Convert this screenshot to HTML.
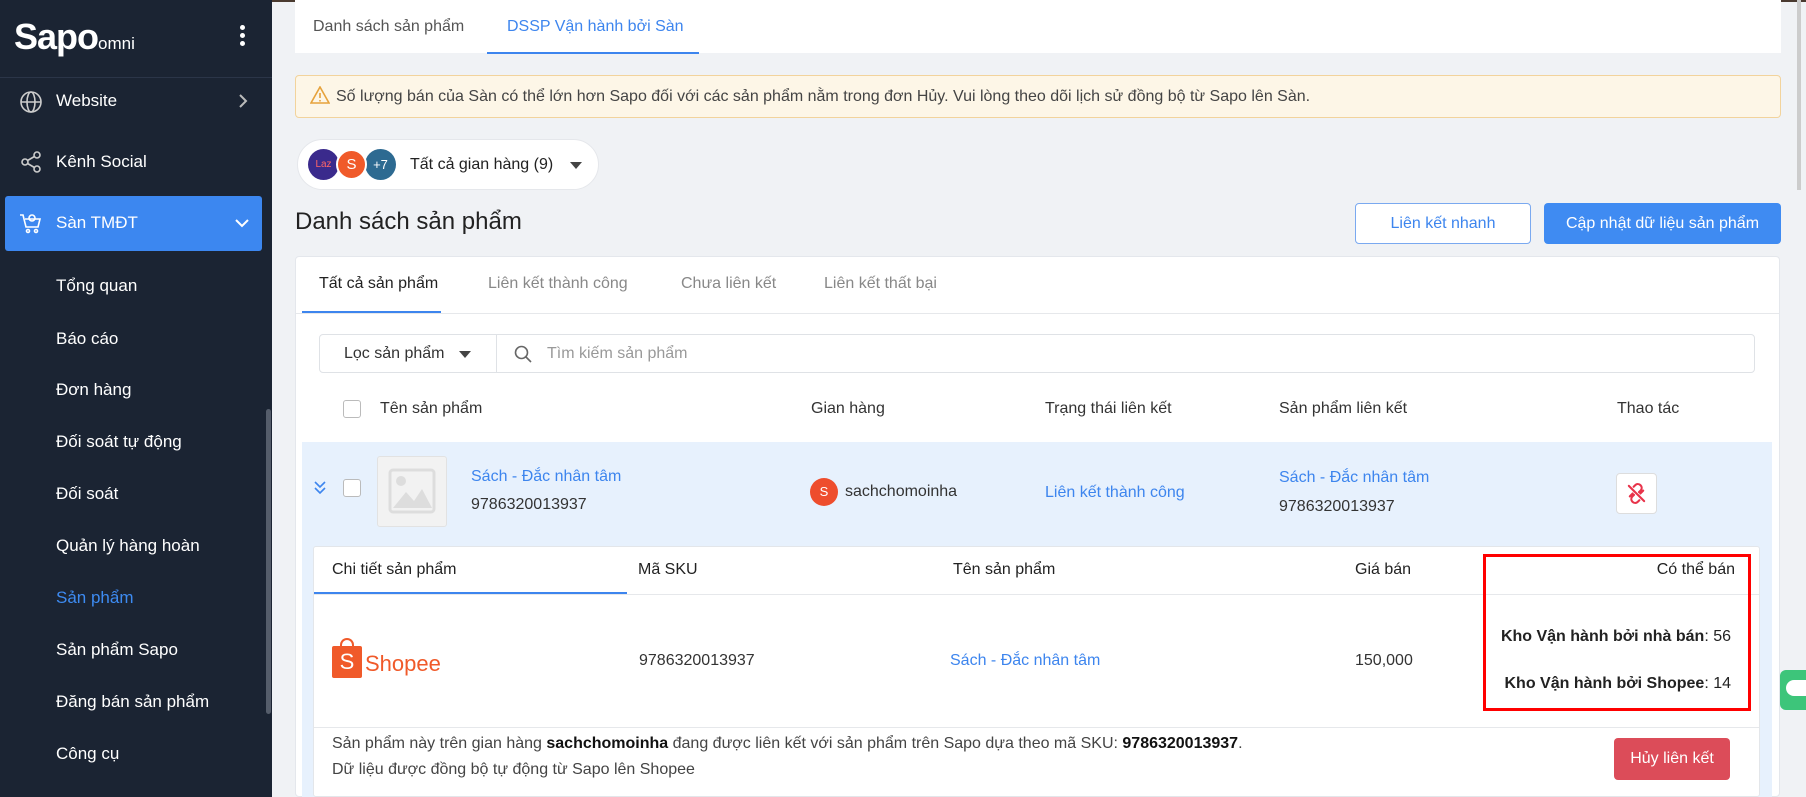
<!DOCTYPE html>
<html><head><meta charset="utf-8"><style>
*{margin:0;padding:0;box-sizing:border-box}
body{width:1806px;height:797px;overflow:hidden;background:#f0f2f5;font-family:"Liberation Sans",sans-serif;font-size:16px;color:#222;position:relative}
.a{position:absolute;white-space:nowrap}
.side{position:absolute;left:0;top:0;width:272px;height:797px;background:#1b2433}
.side .a{color:#fff;font-size:17px}
.blue{color:#3d85ee}
.cb{position:absolute;width:18px;height:18px;border:1.5px solid #bbb;border-radius:3px;background:#fff}
.tc{transform:translateY(-50%)}
</style></head><body>
<div class="a" style="left:0;top:0;width:1806px;height:2px;background:#4a3a30"></div>
<div class="side">
  <div class="a" style="left:14px;top:16px;font-size:36px;font-weight:bold;letter-spacing:-1px;color:#fff">Sapo<span style="font-size:17px;font-weight:normal;letter-spacing:0">omni</span></div>
  <div class="a" style="left:240px;top:25px;width:5px;height:5px;border-radius:50%;background:#fff;box-shadow:0 8px 0 #fff,0 16px 0 #fff"></div>
  <div class="a" style="left:0;top:77px;width:272px;height:1px;background:#2b3548"></div>
  <svg class="a" style="left:19px;top:90px" width="24" height="24" viewBox="0 0 24 24" fill="none" stroke="#ccc" stroke-width="1.6"><circle cx="12" cy="12" r="10"/><ellipse cx="12" cy="12" rx="4" ry="10"/><path d="M2 12h20"/></svg>
  <div class="a tc" style="left:56px;top:101px">Website</div>
  <svg class="a" style="left:238px;top:93px" width="10" height="16" viewBox="0 0 10 16" fill="none" stroke="#bbb" stroke-width="2"><path d="M2 2l6 6-6 6"/></svg>
  <svg class="a" style="left:19px;top:150px" width="24" height="24" viewBox="0 0 24 24" fill="none" stroke="#ccc" stroke-width="1.6"><circle cx="18" cy="5" r="3"/><circle cx="6" cy="12" r="3"/><circle cx="18" cy="19" r="3"/><path d="M8.6 13.5l6.8 4M15.4 6.5l-6.8 4"/></svg>
  <div class="a tc" style="left:56px;top:162px">Kênh Social</div>
  <div class="a" style="left:5px;top:196px;width:257px;height:55px;background:#3c87f0;border-radius:3px"></div>
  <svg class="a" style="left:19px;top:211px" width="24" height="24" viewBox="0 0 24 24" fill="none" stroke="#fff" stroke-width="1.6"><path d="M1 4h3l3 12h12l2-8H6"/><circle cx="9" cy="20" r="1.5"/><circle cx="17" cy="20" r="1.5"/><circle cx="13" cy="7" r="3"/></svg>
  <div class="a tc" style="left:56px;top:223px">Sàn TMĐT</div>
  <svg class="a" style="left:235px;top:218px" width="14" height="10" viewBox="0 0 14 10" fill="none" stroke="#fff" stroke-width="2"><path d="M1 2l6 6 6-6"/></svg>
  <div class="a tc" style="left:56px;top:286px">Tổng quan</div>
  <div class="a tc" style="left:56px;top:339px">Báo cáo</div>
  <div class="a tc" style="left:56px;top:390px">Đơn hàng</div>
  <div class="a tc" style="left:56px;top:442px">Đối soát tự động</div>
  <div class="a tc" style="left:56px;top:494px">Đối soát</div>
  <div class="a tc" style="left:56px;top:546px">Quản lý hàng hoàn</div>
  <div class="a tc" style="left:56px;top:598px;color:#3d8bf2">Sản phẩm</div>
  <div class="a tc" style="left:56px;top:650px">Sản phẩm Sapo</div>
  <div class="a tc" style="left:56px;top:702px">Đăng bán sản phẩm</div>
  <div class="a tc" style="left:56px;top:754px">Công cụ</div>
  <div class="a" style="left:266px;top:409px;width:5px;height:305px;background:#555d6b;border-radius:3px"></div>
</div>

<div class="a" style="left:295px;top:0;width:1486px;height:53px;background:#fff"></div>
<div class="a tc" style="left:313px;top:27px;color:#555">Danh sách sản phẩm</div>
<div class="a tc blue" style="left:507px;top:27px">DSSP Vận hành bởi Sàn</div>
<div class="a" style="left:487px;top:52px;width:212px;height:2px;background:#3d85ee"></div>

<div class="a" style="left:295px;top:75px;width:1486px;height:43px;background:#fdf6e7;border:1px solid #f2d39c;border-radius:4px"></div>
<svg class="a" style="left:310px;top:86px" width="20" height="18" viewBox="0 0 20 18" fill="none" stroke="#e6a23c" stroke-width="1.6"><path d="M10 1L19 17H1Z"/><path d="M10 7v5M10 14v1.5"/></svg>
<div class="a tc" style="left:336px;top:97px;color:#444">Số lượng bán của Sàn có thể lớn hơn Sapo đối với các sản phẩm nằm trong đơn Hủy. Vui lòng theo dõi lịch sử đồng bộ từ Sapo lên Sàn.</div>

<div class="a" style="left:297px;top:139px;width:302px;height:51px;background:#fff;border-radius:26px;border:1px solid #e5e7eb"></div>
<div class="a" style="left:308px;top:149px;width:31px;height:31px;border-radius:50%;background:#3a2a8c;color:#f66;font-size:10px;line-height:31px;text-align:center">Laz</div>
<div class="a" style="left:365px;top:149px;width:31px;height:31px;border-radius:50%;background:#2d6a91;color:#fff;font-size:13px;line-height:31px;text-align:center">+7</div>
<div class="a" style="left:336px;top:149px;width:31px;height:31px;border-radius:50%;background:#f05a2a;border:2px solid #fff;color:#fff;font-size:15px;line-height:27px;text-align:center">S</div>
<div class="a tc" style="left:410px;top:165px;color:#222">Tất cả gian hàng (9)</div>
<div class="a" style="left:570px;top:162px;border-left:6px solid transparent;border-right:6px solid transparent;border-top:7px solid #444"></div>

<div class="a tc" style="left:295px;top:222px;font-size:24px;color:#222">Danh sách sản phẩm</div>
<div class="a" style="left:1355px;top:203px;width:176px;height:41px;background:#fff;border:1px solid #7aa9f0;border-radius:4px;color:#3d85ee;text-align:center;line-height:39px">Liên kết nhanh</div>
<div class="a" style="left:1544px;top:203px;width:237px;height:41px;background:#3f8bf2;border-radius:4px;color:#fff;text-align:center;line-height:41px">Cập nhật dữ liệu sản phẩm</div>

<div class="a" style="left:295px;top:256px;width:1485px;height:541px;background:#fff;border:1px solid #e4e7ec;border-radius:4px"></div>
<div class="a tc" style="left:319px;top:284px">Tất cả sản phẩm</div>
<div class="a tc" style="left:488px;top:284px;color:#888">Liên kết thành công</div>
<div class="a tc" style="left:681px;top:284px;color:#888">Chưa liên kết</div>
<div class="a tc" style="left:824px;top:284px;color:#888">Liên kết thất bại</div>
<div class="a" style="left:296px;top:313px;width:1483px;height:1px;background:#e6e8eb"></div>
<div class="a" style="left:302px;top:311px;width:139px;height:2px;background:#3d85ee"></div>

<div class="a" style="left:319px;top:334px;width:1436px;height:39px;border:1px solid #dfe2e6;border-radius:4px"></div>
<div class="a tc" style="left:344px;top:354px;color:#333">Lọc sản phẩm</div>
<div class="a" style="left:459px;top:351px;border-left:6px solid transparent;border-right:6px solid transparent;border-top:7px solid #444"></div>
<div class="a" style="left:496px;top:334px;width:1px;height:39px;background:#dfe2e6"></div>
<svg class="a" style="left:514px;top:345px" width="18" height="18" viewBox="0 0 18 18" fill="none" stroke="#666" stroke-width="1.6"><circle cx="7.5" cy="7.5" r="6"/><path d="M12 12l5 5"/></svg>
<div class="a tc" style="left:547px;top:354px;color:#999">Tìm kiếm sản phẩm</div>

<div class="cb" style="left:343px;top:400px"></div>
<div class="a tc" style="left:380px;top:409px;color:#333">Tên sản phẩm</div>
<div class="a tc" style="left:811px;top:409px;color:#333">Gian hàng</div>
<div class="a tc" style="left:1045px;top:409px;color:#333">Trạng thái liên kết</div>
<div class="a tc" style="left:1279px;top:409px;color:#333">Sản phẩm liên kết</div>
<div class="a tc" style="left:1617px;top:409px;color:#333">Thao tác</div>

<div class="a" style="left:302px;top:442px;width:1470px;height:355px;background:#e7f1fd"></div>
<svg class="a" style="left:313px;top:480px" width="14" height="16" viewBox="0 0 14 16" fill="none" stroke="#3d85ee" stroke-width="1.6"><path d="M2 2l5 5 5-5M2 8l5 5 5-5"/></svg>
<div class="cb" style="left:343px;top:479px"></div>
<div class="a" style="left:377px;top:456px;width:70px;height:71px;background:#f2f2f2;border:1px solid #e2e2e2;border-radius:3px"></div>
<svg class="a" style="left:388px;top:468px" width="48" height="46" viewBox="0 0 48 46"><rect x="2" y="2" width="44" height="42" rx="3" fill="none" stroke="#ddd" stroke-width="3"/><circle cx="13" cy="13" r="5" fill="#ddd"/><path d="M5 40l13-16 8 9 8-12 10 19z" fill="#ddd"/></svg>
<div class="a tc blue" style="left:471px;top:477px">Sách - Đắc nhân tâm</div>
<div class="a tc" style="left:471px;top:505px;color:#333">9786320013937</div>
<div class="a" style="left:810px;top:478px;width:28px;height:28px;border-radius:50%;background:#ee4d2d;color:#fff;font-size:13px;line-height:28px;text-align:center">S</div>
<div class="a tc" style="left:845px;top:492px;color:#333">sachchomoinha</div>
<div class="a tc blue" style="left:1045px;top:493px">Liên kết thành công</div>
<div class="a tc blue" style="left:1279px;top:478px">Sách - Đắc nhân tâm</div>
<div class="a tc" style="left:1279px;top:507px;color:#333">9786320013937</div>
<div class="a" style="left:1616px;top:473px;width:41px;height:41px;background:#fff;border:1px solid #ddd;border-radius:4px"></div>
<svg class="a" style="left:1625px;top:482px" width="23" height="23" viewBox="0 0 24 24" fill="none" stroke="#e8334a" stroke-width="2.2" stroke-linecap="round"><path d="M9 5l2-2a4 4 0 015.6 5.6l-2 2M15 19l-2 2a4 4 0 01-5.6-5.6l2-2M4 4l16 16M8 12l-3 3M16 12l3-3"/></svg>

<div class="a" style="left:313px;top:546px;width:1447px;height:251px;background:#fff;border:1px solid #e3e6ea;border-radius:3px"></div>
<div class="a tc" style="left:332px;top:570px">Chi tiết sản phẩm</div>
<div class="a tc" style="left:638px;top:570px">Mã SKU</div>
<div class="a tc" style="left:953px;top:570px">Tên sản phẩm</div>
<div class="a tc" style="left:1355px;top:570px">Giá bán</div>
<div class="a tc" style="right:71px;top:570px">Có thể bán</div>
<div class="a" style="left:314px;top:594px;width:1445px;height:1px;background:#e6e8eb"></div>
<div class="a" style="left:314px;top:592px;width:313px;height:2px;background:#3d85ee"></div>

<div class="a" style="left:332px;top:646px;width:30px;height:32px;background:#f05a2a;border-radius:2px;color:#fff;font-size:22px;line-height:32px;text-align:center">S</div>
<div class="a" style="left:340px;top:638px;width:14px;height:12px;border:2px solid #f05a2a;border-bottom:none;border-radius:7px 7px 0 0"></div>
<div class="a tc" style="left:365px;top:664px;font-size:22px;color:#f05a2a">Shopee</div>
<div class="a tc" style="left:639px;top:661px;color:#333">9786320013937</div>
<div class="a tc blue" style="left:950px;top:661px">Sách - Đắc nhân tâm</div>
<div class="a tc" style="left:1355px;top:661px;color:#333">150,000</div>
<div class="a tc" style="right:75px;top:637px"><b>Kho Vận hành bởi nhà bán</b>: 56</div>
<div class="a tc" style="right:75px;top:684px"><b>Kho Vận hành bởi Shopee</b>: 14</div>
<div class="a" style="left:1483px;top:554px;width:268px;height:157px;border:3px solid #f00"></div>

<div class="a" style="left:314px;top:727px;width:1445px;height:1px;background:#e6e8eb"></div>
<div class="a tc" style="left:332px;top:744px;color:#444">Sản phẩm này trên gian hàng <b style="color:#111">sachchomoinha</b> đang được liên kết với sản phẩm trên Sapo dựa theo mã SKU: <b style="color:#111">9786320013937</b>.</div>
<div class="a tc" style="left:332px;top:770px;color:#444">Dữ liệu được đồng bộ tự động từ Sapo lên Shopee</div>
<div class="a" style="left:1614px;top:738px;width:116px;height:42px;background:#dc4c59;border-radius:4px;color:#fff;text-align:center;line-height:42px">Hủy liên kết</div>

<div class="a" style="left:1797px;top:0;width:4px;height:190px;background:#ccc"></div>
<div class="a" style="left:1780px;top:670px;width:26px;height:40px;background:#3dc57a;border-radius:6px 0 0 6px"></div>
<div class="a" style="left:1786px;top:680px;width:20px;height:16px;background:#fff;border-radius:8px 0 0 8px"></div>
</body></html>
